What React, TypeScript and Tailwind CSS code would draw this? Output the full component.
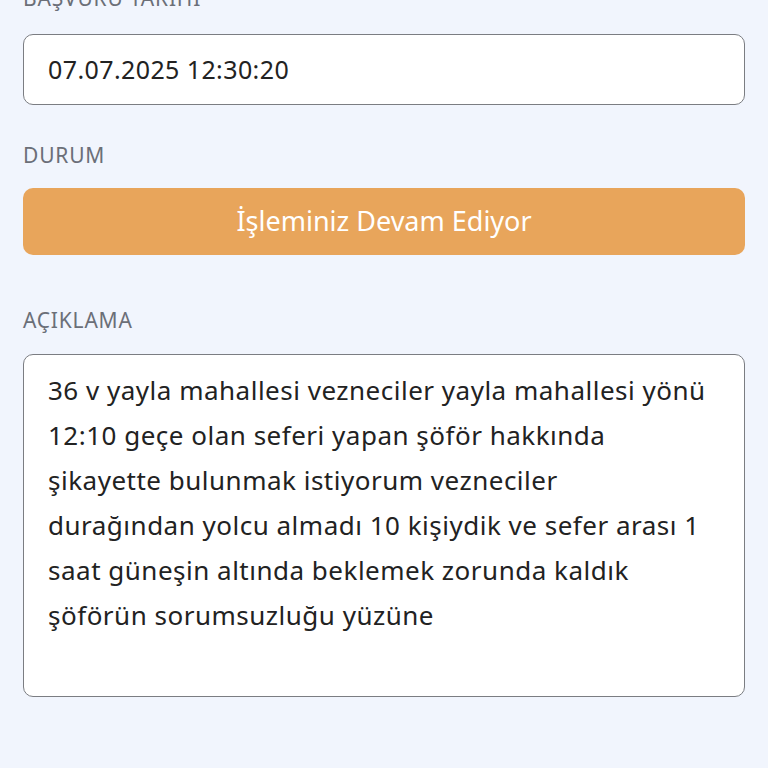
export default function App() {
  const font = { fontFamily: '"Noto Sans", Lato, sans-serif' };
  const lines = [
    "36 v yayla mahallesi vezneciler yayla mahallesi yönü",
    "12:10 geçe olan seferi yapan şöför hakkında",
    "şikayette bulunmak istiyorum vezneciler",
    "durağından yolcu almadı 10 kişiydik ve sefer arası 1",
    "saat güneşin altında beklemek zorunda kaldık",
    "şöförün sorumsuzluğu yüzüne",
  ];
  return (
    <div className="w-[768px] h-[768px] overflow-hidden bg-[#f1f5fd]" style={font}>
      <div className="px-[23px] -mt-[14px] flex flex-col">
        <div className="text-[21px] leading-[24px] text-[#6b6f78] tracking-[0.8px]">BAŞVURU TARİHİ</div>
        <div className="mt-[24px] h-[71px] rounded-[10px] border-[1.5px] border-[#7b7d82] bg-white flex items-center px-[24px] text-[25px] tracking-[0.4px] text-[#222]">
          07.07.2025 12:30:20
        </div>
        <div className="mt-[38px] text-[21px] leading-[24px] text-[#6b6f78] tracking-[0.8px]">DURUM</div>
        <div className="mt-[21px] h-[67px] rounded-[10px] bg-[#e8a55b] flex items-center justify-center text-white text-[27px]">
          İşleminiz Devam Ediyor
        </div>
        <div className="mt-[53px] text-[21px] leading-[24px] text-[#6b6f78] tracking-[0.8px]">AÇIKLAMA</div>
        <div className="mt-[22px] h-[343px] rounded-[10px] border-[1.5px] border-[#7b7d82] bg-white px-[24px] pt-[13px] text-[26px] tracking-[0.5px] leading-[45px] text-[#222]">
          {lines.map((l) => (
            <div key={l} className="whitespace-nowrap">{l}</div>
          ))}
        </div>
      </div>
    </div>
  );
}
